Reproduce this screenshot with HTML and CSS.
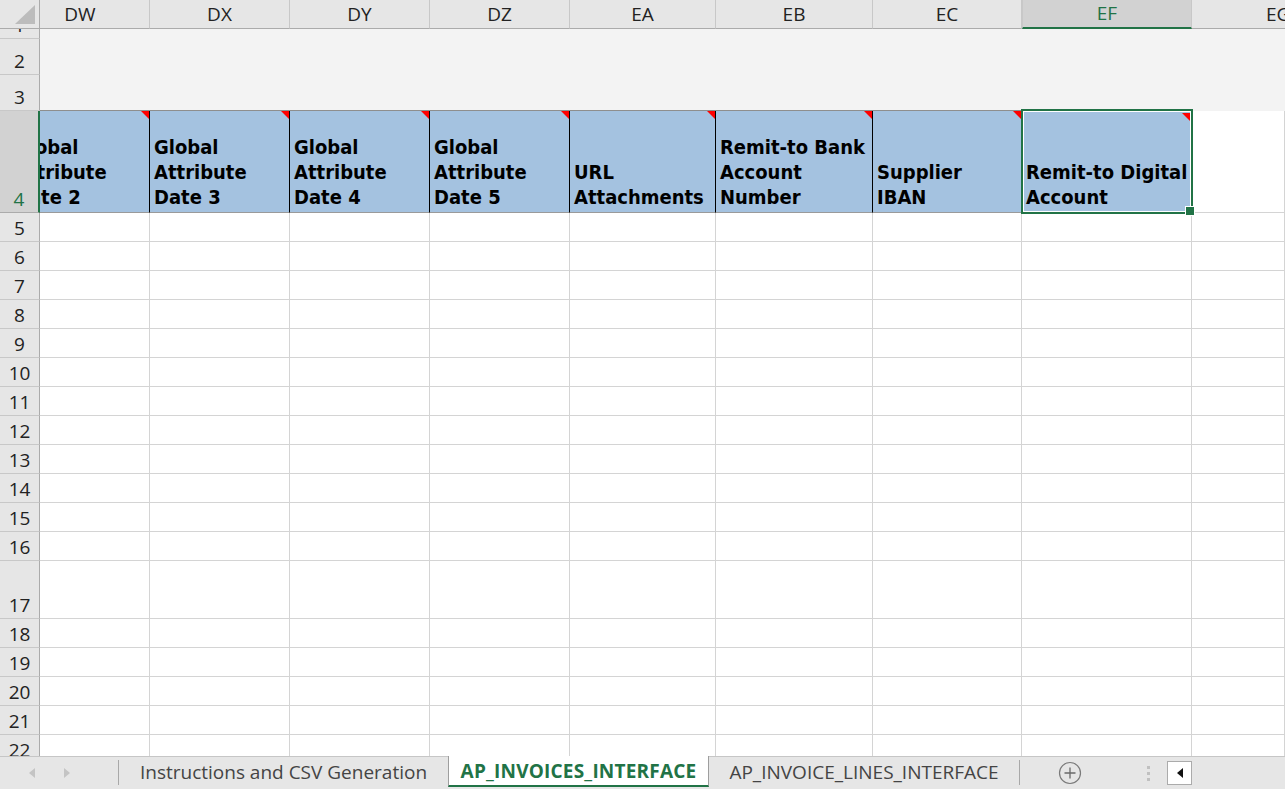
FILE: index.html
```html
<!DOCTYPE html>
<html>
<head>
<meta charset="utf-8">
<link rel="stylesheet" href="styles.css">
</head>
<body>
<div class="app">
  <div class="sheet">
    <div class="row hdr">
      <div class="corner"></div>
      <div class="ch clip"><span class="shift">DW</span></div>
      <div class="ch">DX</div>
      <div class="ch">DY</div>
      <div class="ch">DZ</div>
      <div class="ch">EA</div>
      <div class="ch">EB</div>
      <div class="ch">EC</div>
      <div class="ch sel">EF</div>
      <div class="ch eg">EG</div>
    </div>
    <div class="row r1 fill"><div class="rh">1</div><div class="c"></div><div class="c"></div><div class="c"></div><div class="c"></div><div class="c"></div><div class="c"></div><div class="c"></div><div class="c"></div><div class="c"></div></div>
    <div class="row r2 fill"><div class="rh">2</div><div class="c"></div><div class="c"></div><div class="c"></div><div class="c"></div><div class="c"></div><div class="c"></div><div class="c"></div><div class="c"></div><div class="c"></div></div>
    <div class="row r3 fill"><div class="rh">3</div><div class="c edge"></div><div class="c edge"></div><div class="c edge"></div><div class="c edge"></div><div class="c edge"></div><div class="c edge"></div><div class="c edge"></div><div class="c edge"></div><div class="c"></div></div>
    <div class="row r4">
      <div class="rh cur">4</div>
      <div class="hc clip"><div class="shift">Global<br>Attribute<br>Date 2</div><span class="note"></span></div>
      <div class="hc"><div>Global<br>Attribute<br>Date 3</div><span class="note"></span></div>
      <div class="hc"><div>Global<br>Attribute<br>Date 4</div><span class="note"></span></div>
      <div class="hc"><div>Global<br>Attribute<br>Date 5</div><span class="note"></span></div>
      <div class="hc"><div>URL<br>Attachments</div><span class="note"></span></div>
      <div class="hc"><div>Remit-to Bank<br>Account<br>Number</div><span class="note"></span></div>
      <div class="hc"><div>Supplier<br>IBAN</div><span class="note"></span></div>
      <div class="hc sel"><div>Remit-to Digital<br>Account</div><span class="note"></span></div>
      <div class="c"></div>
    </div>
    <div class="row"><div class="rh">5</div><div class="c"></div><div class="c"></div><div class="c"></div><div class="c"></div><div class="c"></div><div class="c"></div><div class="c"></div><div class="c"></div><div class="c"></div></div>
    <div class="row"><div class="rh">6</div><div class="c"></div><div class="c"></div><div class="c"></div><div class="c"></div><div class="c"></div><div class="c"></div><div class="c"></div><div class="c"></div><div class="c"></div></div>
    <div class="row"><div class="rh">7</div><div class="c"></div><div class="c"></div><div class="c"></div><div class="c"></div><div class="c"></div><div class="c"></div><div class="c"></div><div class="c"></div><div class="c"></div></div>
    <div class="row"><div class="rh">8</div><div class="c"></div><div class="c"></div><div class="c"></div><div class="c"></div><div class="c"></div><div class="c"></div><div class="c"></div><div class="c"></div><div class="c"></div></div>
    <div class="row"><div class="rh">9</div><div class="c"></div><div class="c"></div><div class="c"></div><div class="c"></div><div class="c"></div><div class="c"></div><div class="c"></div><div class="c"></div><div class="c"></div></div>
    <div class="row"><div class="rh">10</div><div class="c"></div><div class="c"></div><div class="c"></div><div class="c"></div><div class="c"></div><div class="c"></div><div class="c"></div><div class="c"></div><div class="c"></div></div>
    <div class="row"><div class="rh">11</div><div class="c"></div><div class="c"></div><div class="c"></div><div class="c"></div><div class="c"></div><div class="c"></div><div class="c"></div><div class="c"></div><div class="c"></div></div>
    <div class="row"><div class="rh">12</div><div class="c"></div><div class="c"></div><div class="c"></div><div class="c"></div><div class="c"></div><div class="c"></div><div class="c"></div><div class="c"></div><div class="c"></div></div>
    <div class="row"><div class="rh">13</div><div class="c"></div><div class="c"></div><div class="c"></div><div class="c"></div><div class="c"></div><div class="c"></div><div class="c"></div><div class="c"></div><div class="c"></div></div>
    <div class="row"><div class="rh">14</div><div class="c"></div><div class="c"></div><div class="c"></div><div class="c"></div><div class="c"></div><div class="c"></div><div class="c"></div><div class="c"></div><div class="c"></div></div>
    <div class="row"><div class="rh">15</div><div class="c"></div><div class="c"></div><div class="c"></div><div class="c"></div><div class="c"></div><div class="c"></div><div class="c"></div><div class="c"></div><div class="c"></div></div>
    <div class="row"><div class="rh">16</div><div class="c"></div><div class="c"></div><div class="c"></div><div class="c"></div><div class="c"></div><div class="c"></div><div class="c"></div><div class="c"></div><div class="c"></div></div>
    <div class="row r17"><div class="rh">17</div><div class="c"></div><div class="c"></div><div class="c"></div><div class="c"></div><div class="c"></div><div class="c"></div><div class="c"></div><div class="c"></div><div class="c"></div></div>
    <div class="row"><div class="rh">18</div><div class="c"></div><div class="c"></div><div class="c"></div><div class="c"></div><div class="c"></div><div class="c"></div><div class="c"></div><div class="c"></div><div class="c"></div></div>
    <div class="row"><div class="rh">19</div><div class="c"></div><div class="c"></div><div class="c"></div><div class="c"></div><div class="c"></div><div class="c"></div><div class="c"></div><div class="c"></div><div class="c"></div></div>
    <div class="row"><div class="rh">20</div><div class="c"></div><div class="c"></div><div class="c"></div><div class="c"></div><div class="c"></div><div class="c"></div><div class="c"></div><div class="c"></div><div class="c"></div></div>
    <div class="row"><div class="rh">21</div><div class="c"></div><div class="c"></div><div class="c"></div><div class="c"></div><div class="c"></div><div class="c"></div><div class="c"></div><div class="c"></div><div class="c"></div></div>
    <div class="row"><div class="rh">22</div><div class="c"></div><div class="c"></div><div class="c"></div><div class="c"></div><div class="c"></div><div class="c"></div><div class="c"></div><div class="c"></div><div class="c"></div></div>
  </div>
  <div class="tabbar">
    <div class="nav">
      <svg class="arr" width="6" height="10" viewBox="0 0 6 10"><path d="M6 0 L0 5 L6 10 Z" fill="#c4c4c4"/></svg>
      <svg class="arr" width="6" height="10" viewBox="0 0 6 10"><path d="M0 0 L6 5 L0 10 Z" fill="#c4c4c4"/></svg>
    </div>
    <div class="sep"></div>
    <div class="tab t1">Instructions and CSV Generation</div>
    <div class="tab active">AP_INVOICES_INTERFACE</div>
    <div class="tab t3">AP_INVOICE_LINES_INTERFACE</div>
    <div class="sep"></div>
    <div class="add">
      <svg width="24" height="24" viewBox="0 0 24 24"><circle cx="12" cy="12" r="10.5" fill="none" stroke="#7a7a7a" stroke-width="1.2"/><path d="M12 6.5 V17.5 M6.5 12 H17.5" stroke="#6a6a6a" stroke-width="1.3"/></svg>
    </div>
    <div class="dots"><i></i><i></i><i></i></div>
    <div class="sbtn"><svg width="6" height="10" viewBox="0 0 6 10"><path d="M6 0 L0 5 L6 10 Z" fill="#111"/></svg></div>
    <div class="track"></div>
  </div>
</div>
</body>
</html>
```
FILE: styles.css
```css
* { box-sizing: border-box; }
html, body { margin: 0; padding: 0; background: #fff; overflow: hidden; }
.app { width: 1285px; height: 789px; display: flex; flex-direction: column; }
.sheet { height: 756px; flex: none; overflow: hidden; }

.row {
  display: grid;
  grid-template-columns: 40px 110px 140px 140px 140px 146px 157px 149px 170px 1fr;
  height: 29px;
}
.r1 { height: 10px; }
.r2, .r3 { height: 36px; }
.r4 { height: 102px; }
.r17 { height: 58px; }

.corner {
  position: relative;
  background: #e6e6e6;
  border-right: 1px solid #ababab;
  border-bottom: 1px solid #ababab;
}
.corner::after {
  content: "";
  position: absolute;
  right: 4px;
  bottom: 4px;
  width: 20px;
  height: 19px;
  background: #bcbcbc;
  clip-path: polygon(100% 0, 100% 100%, 0 100%);
}

.ch {
  background: #e6e6e6;
  border-right: 1px solid #c8c8c8;
  border-bottom: 1px solid #ababab;
  display: flex;
  align-items: center;
  justify-content: center;
  font: 19px "Open Sans", sans-serif;
  color: #222;
  padding-bottom: 1px;
}
.ch.sel {
  background: #d2d2d2;
  color: #217346;
  border-bottom: 2px solid #217346;
  border-left: 1px solid #c8c8c8;
}
.ch.eg { justify-content: flex-start; padding-left: 74px; border-right: none; }

.clip { overflow: hidden; justify-content: flex-start; }
.ch.clip .shift { margin-left: -30px; width: 140px; flex: none; text-align: center; }

.rh {
  background: #e6e6e6;
  border-right: 1px solid #ababab;
  border-bottom: 1px solid #c8c8c8;
  display: flex;
  align-items: flex-end;
  justify-content: center;
  font: 19px/20px "Open Sans", sans-serif;
  color: #222;
  padding-bottom: 3px;
  overflow: hidden;
}
.rh.cur {
  background: #d2d2d2;
  color: #217346;
  border-right: 2px solid #217346;
  border-bottom-color: #ababab;
}

.c {
  border-right: 1px solid #d4d4d4;
  border-bottom: 1px solid #d4d4d4;
}
.fill .c { background: #f3f3f3; border: none; }
.fill .c.edge { border-bottom: 1px solid #8e8e8e; }

.hc {
  position: relative;
  background: #a4c2e0;
  border-right: 1px solid #000;
  border-bottom: 1px solid #9a9a9a;
  display: flex;
  align-items: flex-end;
  padding: 0 2px 2px 4px;
  font: bold 20px/25px "DejaVu Sans Condensed", "DejaVu Sans", sans-serif;
  font-stretch: condensed;
  color: #000;
  white-space: nowrap;
}
.hc.clip { overflow: hidden; }
.hc.clip .shift { margin-left: -30px; flex: none; }
.hc.sel { border-right-color: transparent; }
.hc.sel::after {
  content: "";
  position: absolute;
  top: -2px;
  left: -1px;
  right: -2px;
  bottom: -2px;
  border: 2px solid #217346;
  box-shadow: inset 0 0 0 1px #fff;
  pointer-events: none;
}
.hc.sel::before {
  content: "";
  position: absolute;
  right: -4px;
  bottom: -4px;
  width: 8px;
  height: 8px;
  background: #217346;
  border: 1px solid #fff;
  z-index: 2;
}
.note {
  position: absolute;
  top: 0;
  right: 0;
  width: 8px;
  height: 8px;
  background: #f00;
  clip-path: polygon(0 0, 100% 0, 100% 100%);
}
.hc.sel .note { top: 2px; right: 1px; }

/* tab bar */
.tabbar {
  flex: none;
  height: 33px;
  background: #e6e6e6;
  border-top: 1px solid #c6c6c6;
  display: flex;
  align-items: stretch;
  font: 19px "Open Sans", sans-serif;
  color: #444;
}
.nav {
  width: 118px;
  display: flex;
  align-items: center;
  padding-left: 29px;
  gap: 29px;
}
.sep {
  width: 1px;
  background: #a8a8a8;
  margin: 3px 0 4px;
}
.tab {
  display: flex;
  align-items: center;
  justify-content: center;
  white-space: nowrap;
  padding-bottom: 3px;
}
.t1 { width: 329px; }
.t3 { width: 310px; }
.tab.active {
  width: 261px;
  background: #fff;
  border-left: 1px solid #9e9e9e;
  border-right: 1px solid #9e9e9e;
  border-bottom: 2px solid #217346;
  margin-bottom: 2px;
  margin-top: -1px;
  padding-bottom: 0;
  color: #217346;
  font-weight: bold;
  letter-spacing: 0.2px;
}
.add {
  width: 100px;
  display: flex;
  align-items: center;
  justify-content: center;
}
.dots {
  width: 47px;
  display: flex;
  flex-direction: column;
  justify-content: center;
  gap: 3px;
  padding-left: 27px;
}
.dots i {
  display: block;
  width: 3px;
  height: 3px;
  background: #c0c0c0;
}
.sbtn {
  width: 25px;
  margin: 4px 0 4px;
  background: #fff;
  border: 1px solid #ababab;
  display: flex;
  align-items: center;
  justify-content: center;
}
.track { flex: 1; }
```
